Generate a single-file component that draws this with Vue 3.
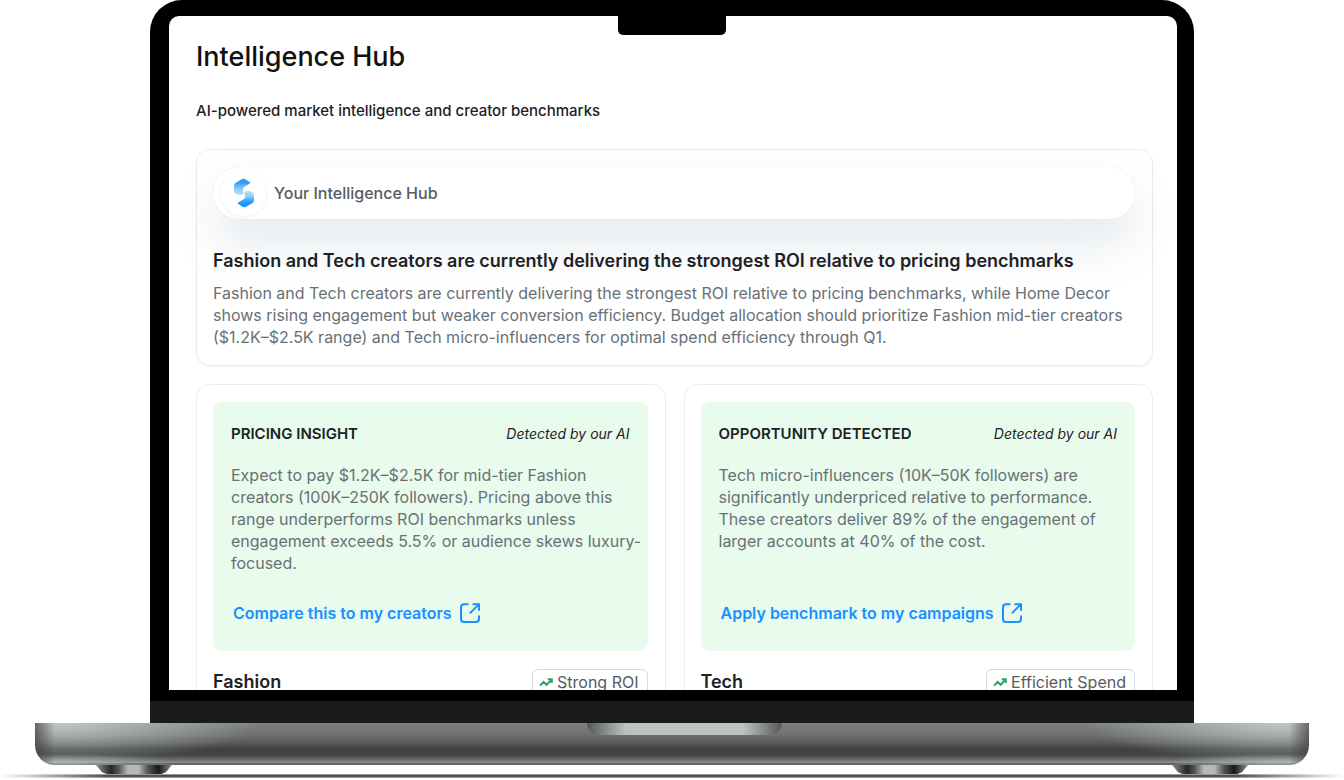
<script setup>
const summary = {
  label: 'Your Intelligence Hub',
  title: 'Fashion and Tech creators are currently delivering the strongest ROI relative to pricing benchmarks',
  text: 'Fashion and Tech creators are currently delivering the strongest ROI relative to pricing benchmarks, while Home Decor shows rising engagement but weaker conversion efficiency. Budget allocation should prioritize Fashion mid-tier creators ($1.2K–$2.5K range) and Tech micro-influencers for optimal spend efficiency through Q1.'
}

const insights = [
  {
    id: 'fashion',
    heading: 'PRICING INSIGHT',
    text: 'Expect to pay $1.2K–$2.5K for mid-tier Fashion creators (100K–250K followers). Pricing above this range underperforms ROI benchmarks unless engagement exceeds 5.5% or audience skews luxury-focused.',
    action: 'Compare this to my creators',
    category: 'Fashion',
    badge: 'Strong ROI'
  },
  {
    id: 'tech',
    heading: 'OPPORTUNITY DETECTED',
    text: 'Tech micro-influencers (10K–50K followers) are significantly underpriced relative to performance. These creators deliver 89% of the engagement of larger accounts at 40% of the cost.',
    action: 'Apply benchmark to my campaigns',
    category: 'Tech',
    badge: 'Efficient Spend'
  }
]
</script>

<template>
  <div class="laptop">
    <div class="lid">
      <div class="notch"></div>
      <main class="screen">
        <h1>Intelligence Hub</h1>
        <p class="subtitle">AI-powered market intelligence and creator benchmarks</p>

        <section class="card summary">
          <div class="pill">
            <span class="pill__logo">
              <svg width="22" height="30" viewBox="0 0 22 30" aria-hidden="true">
                <defs>
                  <linearGradient id="logoTop" x1="0" y1="0" x2="0" y2="1">
                    <stop offset="0.25" stop-color="#2f9df9" />
                    <stop offset="0.45" stop-color="#62b8fb" />
                    <stop offset="0.65" stop-color="#8fcdfa" />
                    <stop offset="1" stop-color="#b5e1f8" />
                  </linearGradient>
                  <linearGradient id="logoBottom" x1="0" y1="0" x2="0" y2="1">
                    <stop offset="0" stop-color="#b5e1f8" />
                    <stop offset="0.35" stop-color="#8fcdfa" />
                    <stop offset="0.55" stop-color="#4aaafb" />
                    <stop offset="0.75" stop-color="#1e93fb" />
                  </linearGradient>
                </defs>
                <path d="M9 1.1 Q10.5 0.2 12 1.1 L17 4.2 Q17.6 5 16.8 5.4 L11.5 8.8 Q9 10.5 10 13 L11 14.6 Q10.4 16.4 8.4 17 H5 L2.4 15.4 Q1 14.4 1 12.8 V7.4 Q1 5.8 2.4 5 Z" fill="url(#logoTop)" />
                <path d="M12.8 28.9 Q11.3 29.8 9.8 28.9 L5 25.8 Q4.4 25 5.2 24.6 L10.5 21.2 Q13 19.5 12 17 L11.4 15.4 Q11.8 13.4 13.8 13 H17 L19.6 14.6 Q21 15.6 21 17.2 V22.6 Q21 24.2 19.6 25 Z" fill="url(#logoBottom)" />
              </svg>
            </span>
            <span class="pill__label">{{ summary.label }}</span>
          </div>
          <h2>{{ summary.title }}</h2>
          <p class="copy">{{ summary.text }}</p>
        </section>

        <div class="grid">
          <article v-for="item in insights" :key="item.id" class="card insight">
            <div class="note">
              <header class="note__head">
                <h3>{{ item.heading }}</h3>
                <em>Detected by our AI</em>
              </header>
              <p class="note__text">{{ item.text }}</p>
              <a class="note__link" href="#">
                {{ item.action }}
                <svg width="20" height="20" viewBox="0 0 20 20" aria-hidden="true">
                  <path d="M8.5 1.2 H4 Q1 1.2 1 4.2 V16 Q1 19 4 19 H16 Q19 19 19 16 V12.5" />
                  <path d="M12.5 1.2 H19 V7.8 M18.6 1.6 L9.8 10.4" />
                </svg>
              </a>
            </div>
            <footer class="insight__foot">
              <h2>{{ item.category }}</h2>
              <span class="badge">
                <svg width="14" height="9" viewBox="0 0 14 9" aria-hidden="true">
                  <path d="M1 7.6 L4.6 4 L7.6 6.8 L12.6 1.6 M8.8 1.3 H12.8 V5" />
                </svg>
                {{ item.badge }}
              </span>
            </footer>
          </article>
        </div>
      </main>
      <div class="chin"></div>
    </div>

    <div class="base">
      <div class="base__lip"></div>
    </div>
    <div class="feet">
      <span class="foot"></span>
      <span class="foot"></span>
    </div>
    <div class="ground"></div>
  </div>
</template>

<style>
body {
  background: #fff;
}
</style>

<style scoped>
.laptop {
  display: flex;
  flex-direction: column;
  height: 100vh;
  overflow: hidden;
  font-family: Inter, 'Liberation Sans', sans-serif;
  color: #1d2125;
}

h1,
h2,
h3,
p {
  margin: 0;
}

.lid {
  position: relative;
  display: flex;
  flex: 1;
  flex-direction: column;
  min-height: 0;
  margin: 0 150px;
  padding: 16px 17px 0 19px;
  background: #000;
  border-radius: 32px 32px 0 0;
}

.notch {
  position: absolute;
  top: 8px;
  left: 50%;
  width: 108px;
  height: 27px;
  margin-left: -54px;
  background: #000;
  border-radius: 0 0 5px 5px;
}

.screen {
  flex: 1;
  min-height: 0;
  padding: 23px 24px 0 27px;
  overflow: hidden;
  background: #fff;
  border-radius: 10px 10px 0 0;
}

.chin {
  height: 22px;
  margin: 11px -17px 0 -19px;
  background: #1b1b1b;
}

h1 {
  font-size: 27px;
  font-weight: 500;
  line-height: 36px;
  color: #111;
}

.subtitle {
  margin-top: 24px;
  font-size: 15px;
  font-weight: 500;
  line-height: 24px;
}

.card {
  padding: 17px 17px 17px 16px;
  border: 1px solid #e9ecef;
  border-radius: 14px;
}

.summary {
  margin-top: 26px;
  box-shadow: 0 1px 2px rgba(20, 40, 60, 0.06);
}

.pill {
  display: flex;
  align-items: center;
  gap: 8px;
  height: 52px;
  padding-left: 8px;
  background: #fff;
  border-radius: 26px;
  box-shadow: 0 0 1px rgba(30, 50, 70, 0.15), 0 24px 48px rgba(60, 100, 130, 0.15);
}

.pill__logo {
  display: flex;
  align-items: center;
  justify-content: center;
  width: 45px;
  height: 45px;
  border-radius: 50%;
  box-shadow: 0 1px 4px rgba(30, 60, 90, 0.08);
}

.pill__label {
  font-size: 16px;
  font-weight: 500;
  color: #565c60;
}

h2 {
  font-size: 18px;
  font-weight: 600;
  line-height: 26px;
}

.summary h2 {
  margin-top: 29px;
}

.copy,
.note__text {
  font-size: 16px;
  line-height: 22px;
  color: #687076;
}

.copy {
  margin-top: 8px;
}

.grid {
  display: grid;
  grid-template-columns: 1fr 1fr;
  gap: 18px;
  margin-top: 18px;
}

.insight {
  display: flex;
  flex-direction: column;
}

.note {
  display: flex;
  flex: 1;
  flex-direction: column;
  align-items: flex-start;
  padding: 18px 4px 25px 18px;
  background: #e8fbec;
  border-radius: 9px;
}

.note__head {
  display: flex;
  align-items: center;
  justify-content: space-between;
  align-self: stretch;
  height: 26px;
  padding-right: 14px;
}

h3 {
  font-size: 15px;
  font-weight: 600;
}

em {
  font-size: 14px;
}

.note__text {
  margin: 18px 0 26px;
}

.note__link {
  display: flex;
  align-items: center;
  gap: 8px;
  margin-top: auto;
  padding-left: 2px;
  font-size: 16px;
  font-weight: 600;
  line-height: 26px;
  color: #1890ff;
  text-decoration: none;
}

.note__link svg {
  fill: none;
  stroke: currentColor;
  stroke-width: 2;
}

.insight__foot {
  display: flex;
  align-items: center;
  justify-content: space-between;
  margin-top: 18px;
}

.badge {
  display: flex;
  align-items: center;
  gap: 4px;
  padding: 0 8px 0 6px;
  font-size: 16px;
  line-height: 24px;
  color: #565c60;
  border: 1px solid #d5dadd;
  border-radius: 6px;
}

.badge svg {
  fill: none;
  stroke: #2fa36b;
  stroke-width: 2;
}

.base {
  display: flex;
  justify-content: center;
  height: 42px;
  margin: 0 35px;
  background:
    linear-gradient(90deg, rgba(60, 60, 62, 0.7), rgba(60, 60, 62, 0) 20px, rgba(60, 60, 62, 0) calc(100% - 20px), rgba(60, 60, 62, 0.7)),
    radial-gradient(200px 40px at 24px 0, rgba(205, 212, 212, 0.85), rgba(205, 212, 212, 0)),
    radial-gradient(200px 40px at calc(100% - 24px) 0, rgba(205, 212, 212, 0.85), rgba(205, 212, 212, 0)),
    radial-gradient(120px 8px at 24px 39px, rgba(205, 212, 212, 0.6), rgba(205, 212, 212, 0)),
    radial-gradient(120px 8px at calc(100% - 24px) 39px, rgba(205, 212, 212, 0.6), rgba(205, 212, 212, 0)),
    linear-gradient(#7d8182 0, #707274 25%, #5b5c5d 45%, #404040 62%, #444 76%, #6c6e70 88%, #85898b 94%, #4c4c4d 98%, #8d8d8d 100%);
  border-radius: 0 0 20px 20px;
}

.base__lip {
  width: 195px;
  height: 12px;
  margin-left: 25px;
  background: linear-gradient(90deg, #555758, #8a8d8e 10%, #bcc2c2 20%, #bcc2c2 80%, #8a8d8e 90%, #555758);
  border-radius: 0 0 12px 12px;
}

.feet {
  display: flex;
  justify-content: space-between;
  padding: 0 96px;
}

.foot {
  width: 76px;
  height: 9px;
  background: linear-gradient(90deg, #8b9092, #22272b 20%, #50565a 30%, #b4b9ba 42%, #b4b9ba 56%, #50565a 68%, #15191d 82%, #8b9092);
  clip-path: polygon(0 0, 100% 0, 92% 80%, 86% 100%, 14% 100%, 8% 80%);
}

.ground {
  height: 4px;
  margin-bottom: 2px;
  background: linear-gradient(90deg, rgba(255, 255, 255, 1), rgba(255, 255, 255, 0) 8%, rgba(255, 255, 255, 0) 92%, rgba(255, 255, 255, 1)), linear-gradient(#ccc, #4d4d4d 30%, #4d4d4d 60%, #bbb);
}
</style>
